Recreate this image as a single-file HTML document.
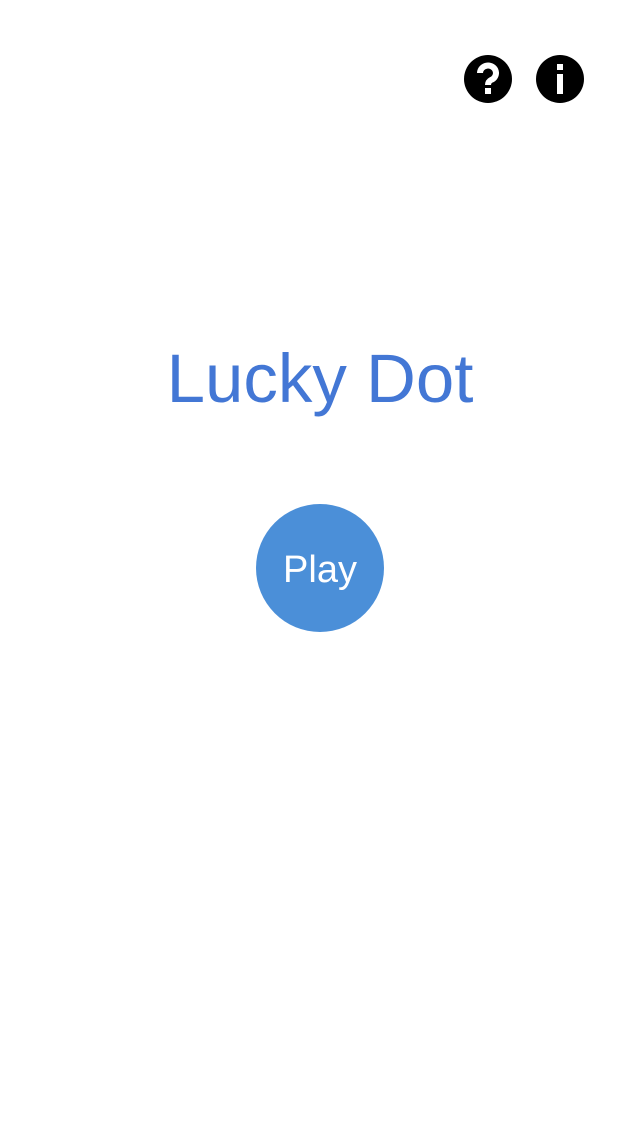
<!DOCTYPE html>
<html><head><style>
body{margin:0;width:640px;height:1136px;background:#fff;position:relative;overflow:hidden;font-family:"Liberation Sans",sans-serif}
.t{position:absolute;left:0;width:640px;text-align:center;color:#4377d5;font-size:69px;line-height:1;top:344px}
.play{position:absolute;left:256px;top:504px;width:128px;height:128px;border-radius:50%;background:#4b8fd8}
.pt{position:absolute;left:0;width:640px;text-align:center;color:#fff;font-size:38px;line-height:1;top:551px}
</style></head><body>
<svg style="position:absolute;left:0;top:0" width="640" height="140">
<circle cx="488" cy="79" r="24" fill="#000"/>
<path d="M480 73 a8 7.5 0 1 1 11 7 q-3 1.5 -3 5" stroke="#fff" stroke-width="6" fill="none"/>
<rect x="485" y="88" width="6" height="6" fill="#fff"/>
<circle cx="560" cy="79" r="24" fill="#000"/>
<rect x="557" y="64" width="6" height="6" fill="#fff"/>
<rect x="557" y="74" width="6" height="20" fill="#fff"/>
</svg>
<div class="t">Lucky Dot</div>
<div class="play"></div>
<div class="pt">Play</div>
</body></html>
